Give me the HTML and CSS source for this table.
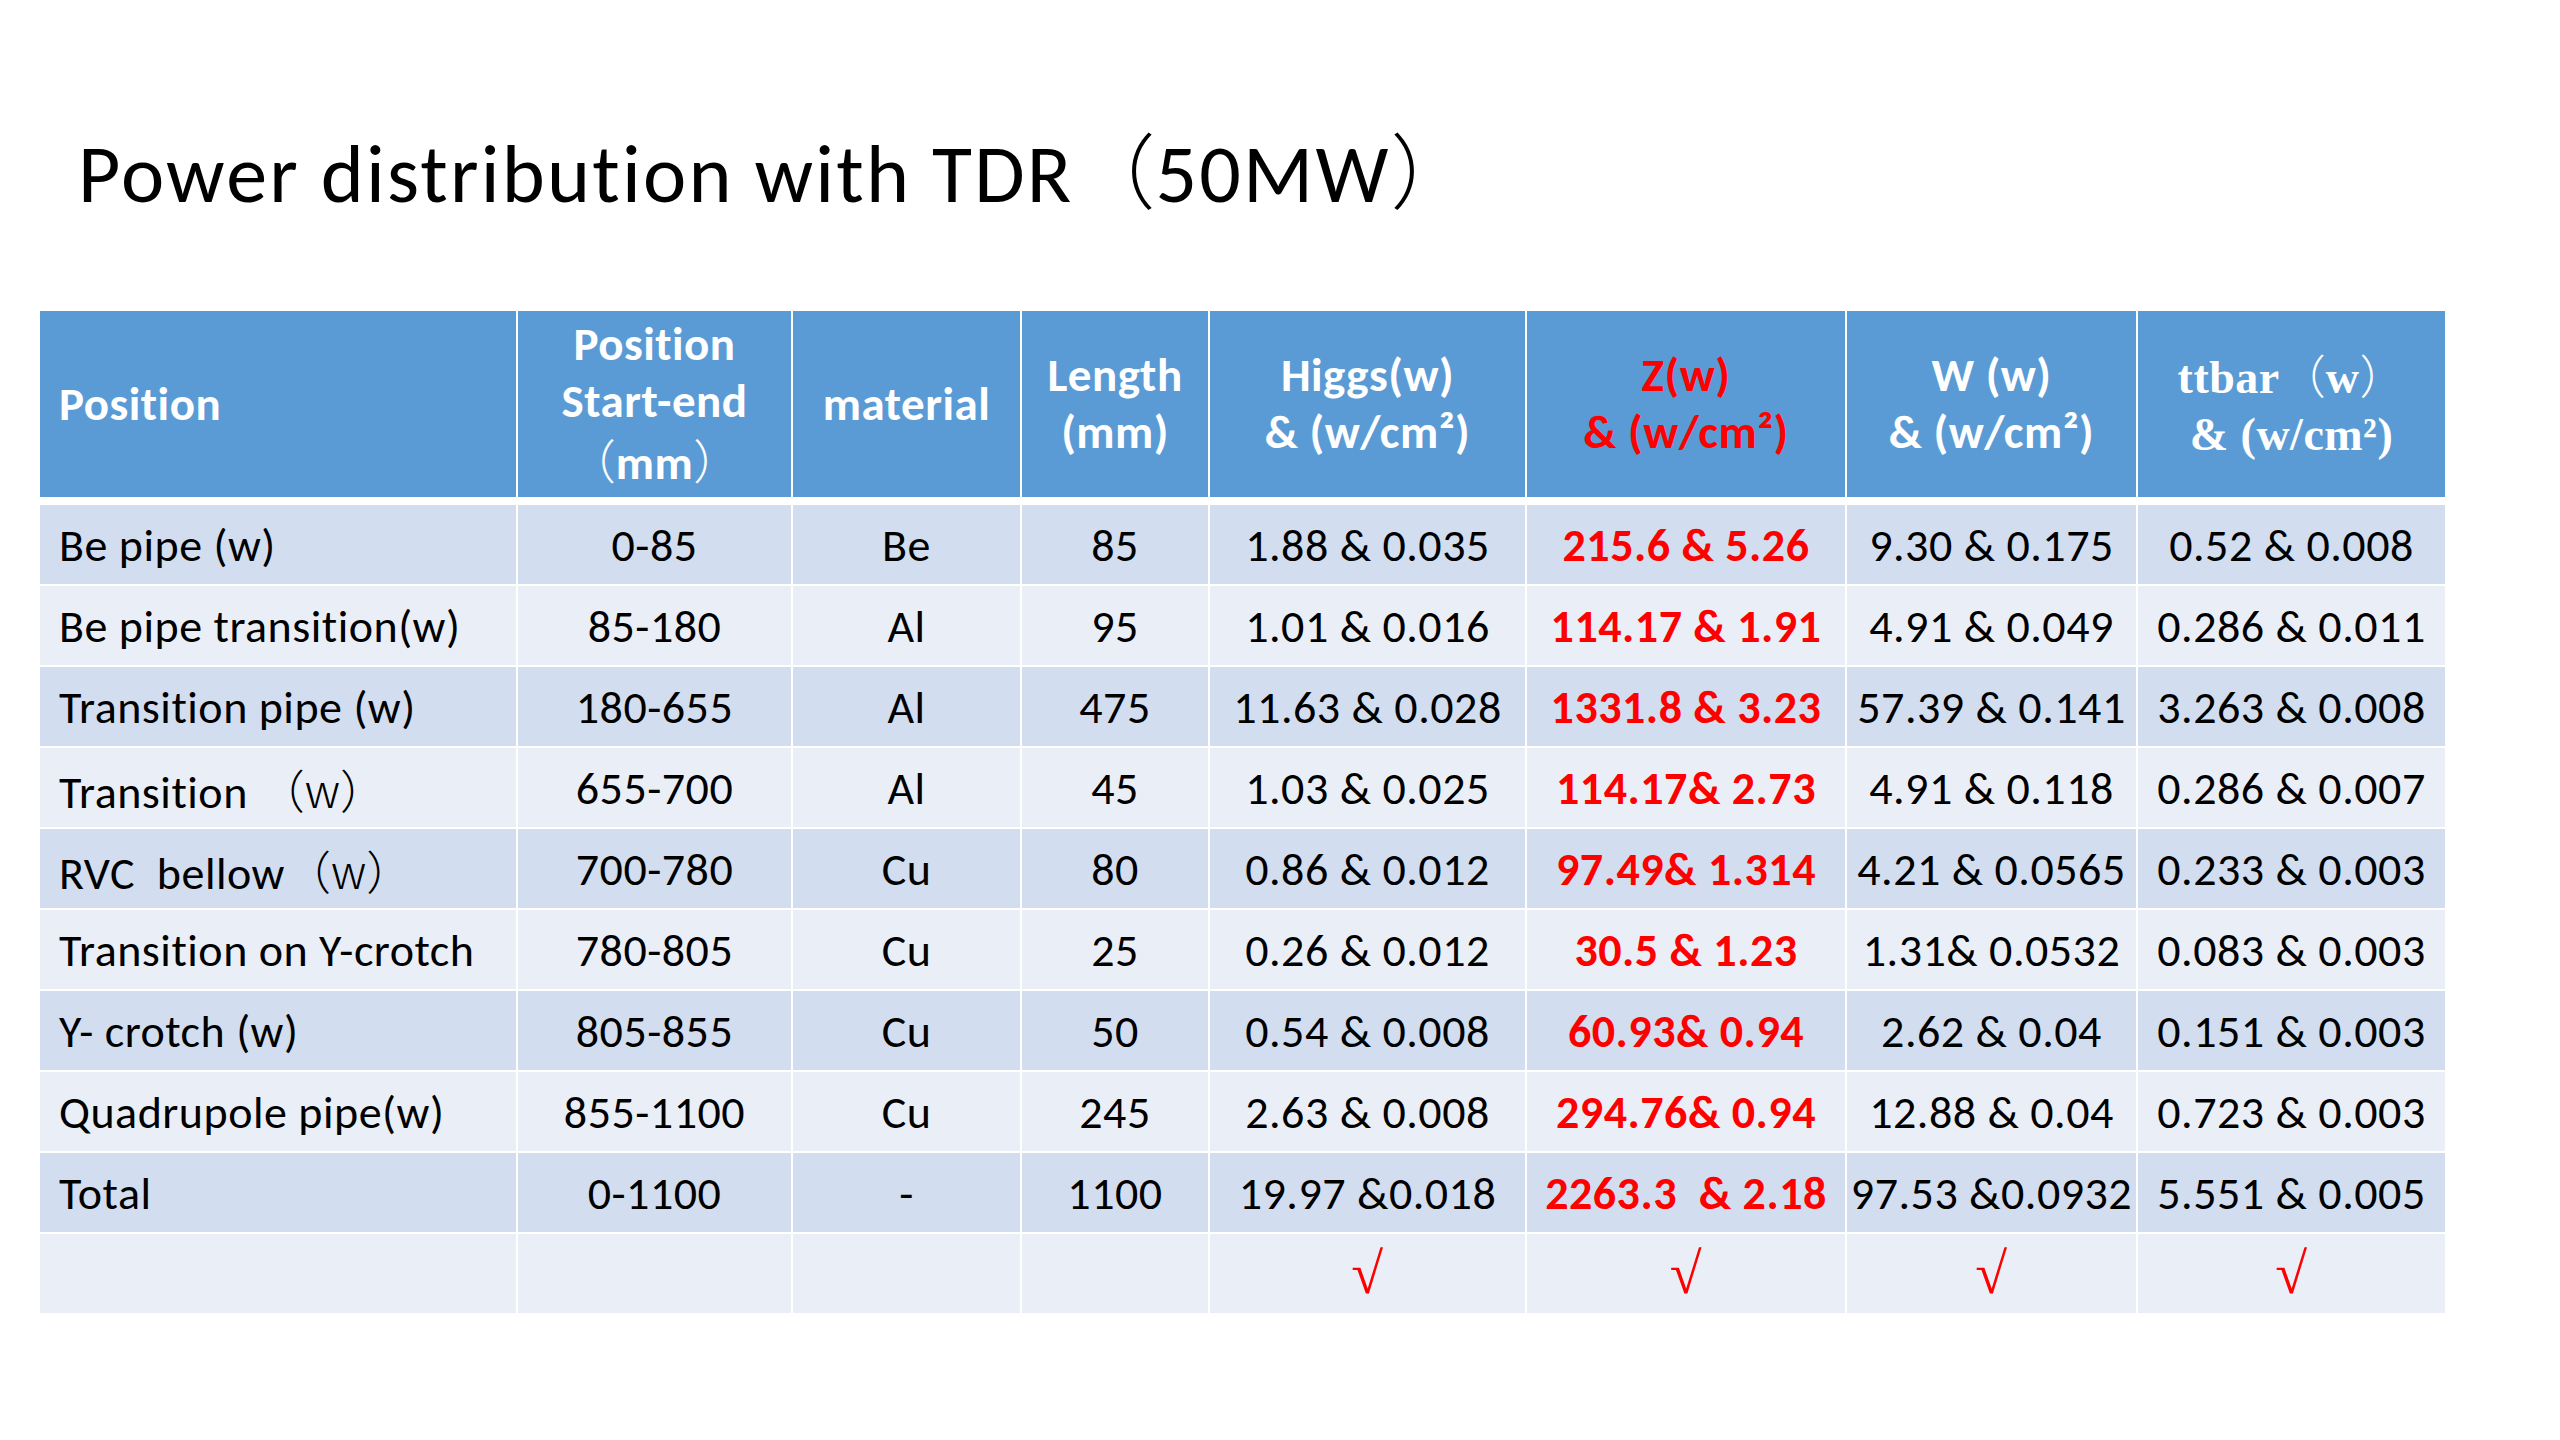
FILE: index.html
```html
<!DOCTYPE html>
<html>
<head>
<meta charset="utf-8">
<link rel="stylesheet" href="styles.css">
</head>
<body>
<div class="slide">
  <h1 class="title">Power distribution with TDR<span class="cjk">（</span>50MW<span class="cjk">）</span></h1>
  <table class="grid">
    <colgroup>
      <col class="c1"><col class="c2"><col class="c3"><col class="c4"><col class="c5"><col class="c6"><col class="c7"><col class="c8">
    </colgroup>
    <thead>
      <tr>
        <th class="left">Position</th>
        <th>Position<br>Start-end<br><span class="cjk">（</span>mm<span class="cjk">）</span></th>
        <th>material</th>
        <th>Length<br>(mm)</th>
        <th>Higgs(w)<br>&amp; (w/cm²)</th>
        <th class="red">Z(w)<br>&amp; (w/cm²)</th>
        <th>W (w)<br>&amp; (w/cm²)</th>
        <th class="serif">ttbar<span class="cjk">（</span>w<span class="cjk">）</span><br>&amp; (w/cm²)</th>
      </tr>
    </thead>
    <tbody>
      <tr class="dark"><td class="left">Be pipe (w)</td><td>0-85</td><td>Be</td><td>85</td><td>1.88 &amp; 0.035</td><td class="red">215.6 &amp; 5.26</td><td>9.30 &amp; 0.175</td><td>0.52 &amp; 0.008</td></tr>
      <tr class="light"><td class="left">Be pipe transition(w)</td><td>85-180</td><td>Al</td><td>95</td><td>1.01 &amp; 0.016</td><td class="red">114.17 &amp; 1.91</td><td>4.91 &amp; 0.049</td><td>0.286 &amp; 0.011</td></tr>
      <tr class="dark"><td class="left">Transition pipe (w)</td><td>180-655</td><td>Al</td><td>475</td><td>11.63 &amp; 0.028</td><td class="red">1331.8 &amp; 3.23</td><td>57.39 &amp; 0.141</td><td>3.263 &amp; 0.008</td></tr>
      <tr class="light"><td class="left">Transition <span class="cjk">（w）</span></td><td>655-700</td><td>Al</td><td>45</td><td>1.03 &amp; 0.025</td><td class="red">114.17&amp; 2.73</td><td>4.91 &amp; 0.118</td><td>0.286 &amp; 0.007</td></tr>
      <tr class="dark"><td class="left">RVC&nbsp; bellow<span class="cjk">（w）</span></td><td>700-780</td><td>Cu</td><td>80</td><td>0.86 &amp; 0.012</td><td class="red">97.49&amp; 1.314</td><td>4.21 &amp; 0.0565</td><td>0.233 &amp; 0.003</td></tr>
      <tr class="light"><td class="left">Transition on Y-crotch</td><td>780-805</td><td>Cu</td><td>25</td><td>0.26 &amp; 0.012</td><td class="red">30.5 &amp; 1.23</td><td>1.31&amp; 0.0532</td><td>0.083 &amp; 0.003</td></tr>
      <tr class="dark"><td class="left">Y- crotch (w)</td><td>805-855</td><td>Cu</td><td>50</td><td>0.54 &amp; 0.008</td><td class="red">60.93&amp; 0.94</td><td>2.62 &amp; 0.04</td><td>0.151 &amp; 0.003</td></tr>
      <tr class="light"><td class="left">Quadrupole pipe(w)</td><td>855-1100</td><td>Cu</td><td>245</td><td>2.63 &amp; 0.008</td><td class="red">294.76&amp; 0.94</td><td>12.88 &amp; 0.04</td><td>0.723 &amp; 0.003</td></tr>
      <tr class="dark"><td class="left">Total</td><td>0-1100</td><td>-</td><td>1100</td><td>19.97 &amp;0.018</td><td class="red">2263.3&nbsp; &amp; 2.18</td><td>97.53 &amp;0.0932</td><td>5.551 &amp; 0.005</td></tr>
      <tr class="light"><td></td><td></td><td></td><td></td><td class="check">√</td><td class="check">√</td><td class="check">√</td><td class="check">√</td></tr>
    </tbody>
  </table>
</div>
</body>
</html>
```
FILE: styles.css
```css
html, body {
  margin: 0;
  padding: 0;
  background: #ffffff;
}

.slide {
  width: 2560px;
  height: 1440px;
  box-sizing: border-box;
  padding: 0 0 0 40px;
  font-family: "Carlito", "Lato", "Noto Sans", sans-serif;
  font-variant-ligatures: none;
  color: #000000;
}

.title {
  margin: 0;
  padding: 117px 0 0 38px;
  height: 311px;
  box-sizing: border-box;
  font-weight: 400;
  font-size: 82px;
  letter-spacing: 2.2px;
  line-height: 100px;
  color: #000000;
}

.cjk {
  font-family: "Noto Sans CJK SC", sans-serif;
  font-weight: 300;
  letter-spacing: 0;
}

.grid {
  border-collapse: separate;
  border-spacing: 0;
  table-layout: fixed;
  width: 2405px;
}

.c1 { width: 478px; }
.c2 { width: 275px; }
.c3 { width: 229px; }
.c4 { width: 188px; }
.c5 { width: 317px; }
.c6 { width: 320px; }
.c7 { width: 291px; }
.c8 { width: 307px; }

.grid th {
  background: #5b9bd5;
  color: #ffffff;
  font-weight: 700;
  font-size: 47px;
  letter-spacing: 0.5px;
  line-height: 57px;
  height: 194px;
  padding: 0;
  border-bottom: 8px solid #ffffff;
  border-right: 2px solid #ffffff;
  text-align: center;
  vertical-align: middle;
  box-sizing: border-box;
}

.grid td {
  font-size: 46px;
  letter-spacing: 0.5px;
  height: 81px;
  padding: 0;
  border-bottom: 2px solid #ffffff;
  border-right: 2px solid #ffffff;
  text-align: center;
  vertical-align: middle;
  white-space: nowrap;
  box-sizing: border-box;
}

.grid th:last-child,
.grid td:last-child {
  border-right: none;
}

.grid th.left,
.grid td.left {
  text-align: left;
  padding-left: 19px;
}

.grid th.red {
  color: #ff0000;
}

.grid td.red {
  color: #ff0000;
  font-weight: 700;
}

.grid th.serif {
  font-family: "Liberation Serif", serif;
  font-size: 46px;
}

.dark td { background: #d2deef; }
.light td { background: #eaeff7; }

.grid td.check {
  color: #ff0000;
  font-family: "Liberation Serif", serif;
  font-size: 58px;
  font-style: italic;
}
```
